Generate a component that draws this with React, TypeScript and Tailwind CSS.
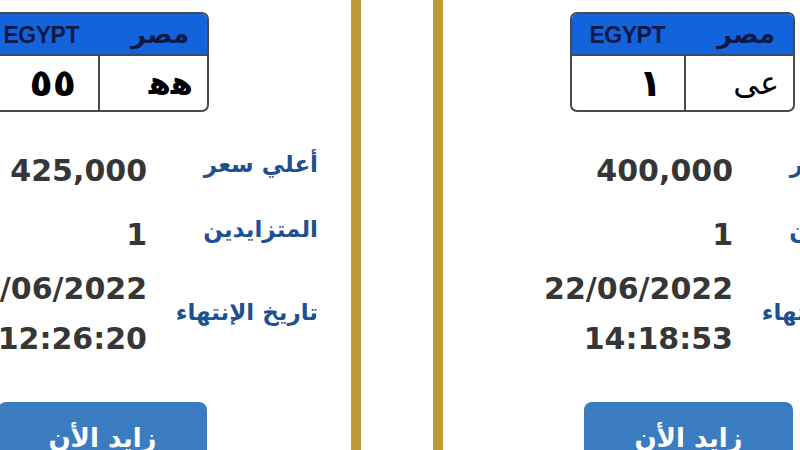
import React from "react";

type Card = {
  num: string;
  letters: string;
  price: string;
  bidders: string;
  date: string;
  time: string;
  lettersBold: boolean;
};

const cards: Card[] = [
  { num: "٥٥", letters: "ﻫﻫ", price: "425,000", bidders: "1", date: "22/06/2022", time: "12:26:20", lettersBold: true },
  { num: "١", letters: "عى", price: "400,000", bidders: "1", date: "22/06/2022", time: "14:18:53", lettersBold: false },
];

const arabic = { fontFamily: '"DejaVu Sans", "Noto Sans", sans-serif' };
const nums = { fontFamily: '"DejaVu Sans", sans-serif' };

function Plate({ c }: { c: Card }) {
  return (
    <div className="shrink-0 ml-[127px] mt-[12px] w-[225px] h-[100px] rounded-[7px] border-2 border-[#4a4a4a] overflow-hidden flex flex-col bg-white">
      <div className="h-[42px] shrink-0 bg-[#1263dc] flex items-center border-b-2 border-[#3a4a6a]">
        <div
          className="w-1/2 pt-[3px] text-center text-[23px] font-bold text-[#0d1a45] leading-none tracking-[-0.5px]"
          style={{ fontFamily: '"Liberation Sans", Arial, sans-serif' }}
        >
          EGYPT
        </div>
        <div dir="rtl" className="w-1/2 pr-[18px] text-right text-[26px] font-bold text-[#0d1a45] leading-none" style={arabic}>
          مصر
        </div>
      </div>
      <div className="flex-1 flex">
        <div
          dir="rtl"
          className="w-[112px] flex items-center justify-start pr-[22px] text-[38px] font-bold text-black leading-none"
          style={arabic}
        >
          {c.num}
        </div>
        <div className="w-[2px] bg-[#4a4a4a]" />
        <div
          dir="rtl"
          className={`flex-1 flex items-center justify-start pr-[14px] text-[32px] text-black leading-none ${c.lettersBold ? "font-bold" : "font-normal"}`}
          style={arabic}
        >
          {c.letters}
        </div>
      </div>
    </div>
  );
}

function Row({ label, values, labelPad }: { label: string; values: string[]; labelPad: string }) {
  return (
    <div className="flex justify-end items-center pr-[33px] gap-[18px]">
      <div dir="ltr" className="flex flex-col items-end">
        {values.map((v) => (
          <div
            key={v}
            className="h-[50px] leading-[50px] text-[30px] font-bold text-[#363636] whitespace-nowrap"
            style={nums}
          >
            {v}
          </div>
        ))}
      </div>
      <div
        dir="rtl"
        className={`w-[153px] shrink-0 text-right text-[23px] font-bold text-[#1d5190] whitespace-nowrap leading-none ${labelPad}`}
        style={arabic}
      >
        {label}
      </div>
    </div>
  );
}

function AuctionCard({ c }: { c: Card }) {
  return (
    <div className="w-[514px] shrink-0 h-full border-x-[10px] border-[#bd9b38] bg-white flex flex-col">
      <Plate c={c} />
      <div className="shrink-0 mt-[34px]">
        <Row label="أعلي سعر" values={[c.price]} labelPad="pb-[14px]" />
      </div>
      <div className="shrink-0 mt-[14px]">
        <Row label="المتزايدين" values={[c.bidders]} labelPad="pb-[12px]" />
      </div>
      <div className="shrink-0 mt-[4px]">
        <Row label="تاريخ الإنتهاء" values={[c.date, c.time]} labelPad="pb-[4px]" />
      </div>
      <div
        dir="rtl"
        className="ml-[141px] mt-[38px] w-[209px] h-[72px] shrink-0 rounded-[8px] bg-[#3b7cc1] flex items-center justify-center text-white text-[26px] font-bold"
        style={arabic}
      >
        زايد الأن
      </div>
    </div>
  );
}

export default function App() {
  return (
    <div className="w-[800px] h-[450px] overflow-hidden bg-white">
      <div className="flex h-full gap-[72px] -ml-[153px]">
        {cards.map((c, i) => (
          <AuctionCard key={i} c={c} />
        ))}
      </div>
    </div>
  );
}
